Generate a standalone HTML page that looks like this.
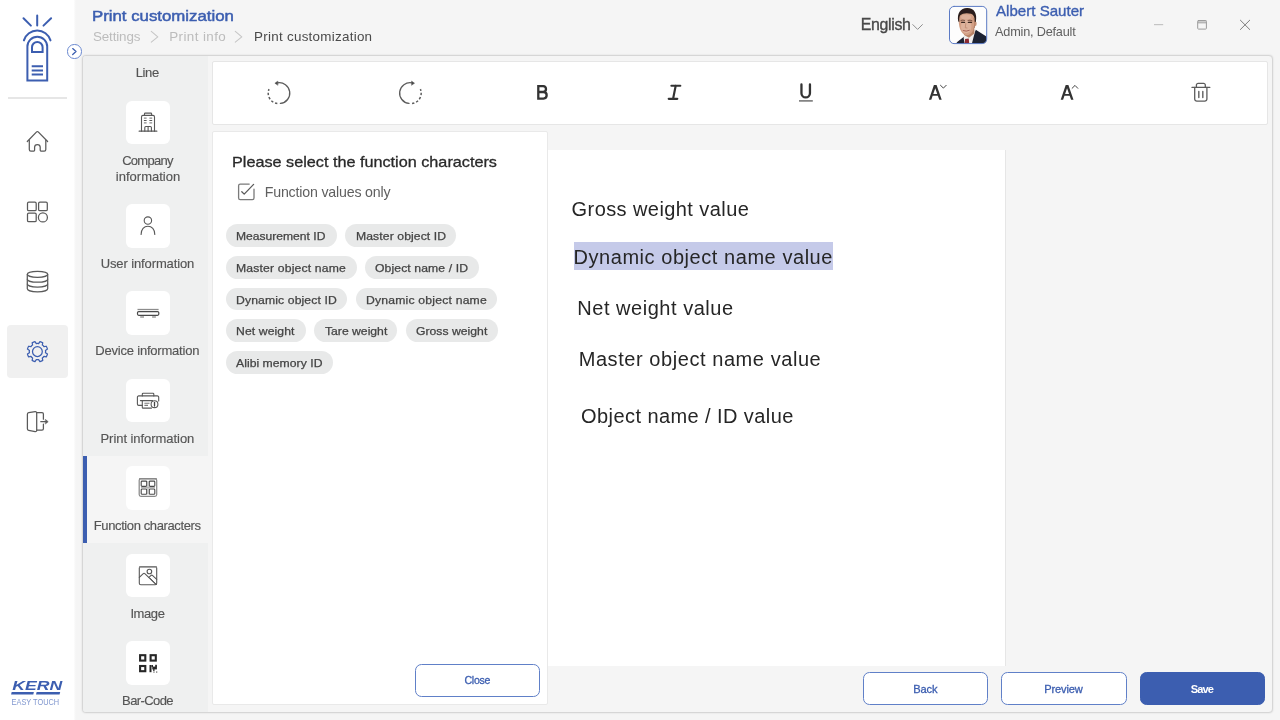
<!DOCTYPE html>
<html>
<head>
<meta charset="utf-8">
<title>Print customization</title>
<style>
*{box-sizing:border-box;margin:0;padding:0}
html,body{width:1280px;height:720px;overflow:hidden;background:#f5f5f5;font-family:"Liberation Sans",sans-serif;color:#333}
.t{position:absolute;white-space:nowrap;line-height:1}
#tx{position:absolute;left:0;top:0;width:1280px;height:720px;will-change:transform}
svg{position:absolute;overflow:visible}
#side{position:absolute;left:0;top:0;width:77px;height:720px;background:linear-gradient(90deg,#fff 0,#fff 73.5px,#f5f5f5 75.8px)}
#sep{position:absolute;left:8px;top:97px;width:59px;height:2px;background:#e6e6e6}
#sel{position:absolute;left:7px;top:325px;width:61px;height:53px;border-radius:4px;background:#f0f0f0}
#expand{position:absolute;left:67.2px;top:44.3px;width:14.4px;height:14.4px;border-radius:50%;background:#fff;border:1.1px solid #6a88cf}
#cont{position:absolute;left:82px;top:55px;width:1191px;height:658px;border:1px solid #d6d6d6;border-radius:4px;background:#f5f5f5;box-shadow:0 0 2px rgba(0,0,0,.12)}
#nav{position:absolute;left:83px;top:56px;width:125px;height:656px;background:#eff0f0;border-radius:3px 0 0 3px}
#navsel{position:absolute;left:84px;top:455.7px;width:124.5px;height:87.6px;background:#f5f5f5}
#navbar{position:absolute;left:83.4px;top:455.7px;width:4.1px;height:87.6px;background:#3c5eb0}
.ib{position:absolute;left:126.1px;width:43.7px;height:43.8px;border-radius:6px;background:#fff}
#tool{position:absolute;left:212px;top:61px;width:1056px;height:64px;background:#fff;border:1px solid #e6e6e6;border-radius:2px}
#pop{position:absolute;left:212px;top:131px;width:336px;height:574px;background:#fff;border:1px solid #e9e9e9;border-radius:2px}
#canvas{position:absolute;left:547px;top:150px;width:459px;height:516px;background:#fff;border-right:1px solid #e6e6e6}
.chip{position:absolute;height:22.9px;border-radius:12px;background:#e8e9e9}
.btn{position:absolute;height:32.7px;border-radius:6.5px;border:1.5px solid #6080c8;background:#fff}
.btn.pri{background:#3c5eb0;border-color:#3c5eb0}
#hl{position:absolute;left:573.5px;top:242px;width:259.5px;height:27.6px;background:#c5cae9}
</style>
</head>
<body>
<div id="side"></div>
<div id="sep"></div>
<div id="sel"></div>
<div id="cont"></div>
<div id="nav"></div>
<div id="navsel"></div>
<div id="navbar"></div>

<div class="ib" style="top:100.6px"></div>
<div class="ib" style="top:203.9px"></div>
<div class="ib" style="top:291.2px"></div>
<div class="ib" style="top:378.5px"></div>
<div class="ib" style="top:465.9px"></div>
<div class="ib" style="top:553.6px"></div>
<div class="ib" style="top:641px"></div>

<div id="tool"></div>
<div id="canvas"></div>
<div id="hl"></div>
<div id="pop"></div>

<div class="chip" style="left:225.7px;top:224.1px;width:111px"></div>
<div class="chip" style="left:345px;top:224.1px;width:110.6px"></div>
<div class="chip" style="left:225.7px;top:255.8px;width:130.9px"></div>
<div class="chip" style="left:365px;top:255.8px;width:114px"></div>
<div class="chip" style="left:225.7px;top:287.5px;width:121.8px"></div>
<div class="chip" style="left:355.9px;top:287.5px;width:141.6px"></div>
<div class="chip" style="left:225.7px;top:319.2px;width:80.4px"></div>
<div class="chip" style="left:314px;top:319.2px;width:83.4px"></div>
<div class="chip" style="left:405.8px;top:319.2px;width:92.4px"></div>
<div class="chip" style="left:225.7px;top:350.9px;width:107.6px"></div>

<div class="btn" style="left:414.8px;top:664.4px;width:125.2px"></div>
<div class="btn" style="left:863.2px;top:672.3px;width:125.3px"></div>
<div class="btn" style="left:1001.3px;top:672.3px;width:125.3px"></div>
<div class="btn pri" style="left:1139.8px;top:672.4px;width:125.4px"></div>

<div id="tx">
<div class="t" style="left:92.09px;top:7.53px;font-size:15.2px;color:#3c5eb0;letter-spacing:0.000px;transform:scaleX(1.1060);transform-origin:0 0;-webkit-text-stroke:0.5px #3c5eb0">Print customization</div>
<div class="t" style="left:93.00px;top:29.86px;font-size:13.4px;color:#bcbcbc;letter-spacing:-0.141px">Settings</div>
<div class="t" style="left:169.20px;top:29.86px;font-size:13.4px;color:#bcbcbc;letter-spacing:0.412px">Print info</div>
<div class="t" style="left:254.10px;top:29.86px;font-size:13.4px;color:#4a4a4a;letter-spacing:0.268px">Print customization</div>
<div class="t" style="left:860.70px;top:17.14px;font-size:15.9px;color:#484848;letter-spacing:-0.313px;-webkit-text-stroke:0.35px #484848">English</div>
<div class="t" style="left:995.50px;top:3.68px;font-size:14.5px;color:#3c5eb0;letter-spacing:0.000px;transform:scaleX(1.0413);transform-origin:0 0;-webkit-text-stroke:0.35px #3c5eb0">Albert Sauter</div>
<div class="t" style="left:995.10px;top:26.35px;font-size:12.7px;color:#606060;letter-spacing:-0.199px">Admin, Default</div>
<div class="t" style="left:135.70px;top:66.20px;font-size:13.0px;color:#555555;letter-spacing:-0.383px;-webkit-text-stroke:0.15px #555555">Line</div>
<div class="t" style="left:122.20px;top:154.30px;font-size:13.0px;color:#555555;letter-spacing:-0.740px;-webkit-text-stroke:0.15px #555555">Company</div>
<div class="t" style="left:115.80px;top:169.90px;font-size:13.0px;color:#555555;letter-spacing:0.012px;-webkit-text-stroke:0.15px #555555">information</div>
<div class="t" style="left:100.70px;top:257.10px;font-size:13.0px;color:#555555;letter-spacing:-0.116px;-webkit-text-stroke:0.15px #555555">User information</div>
<div class="t" style="left:95.30px;top:344.30px;font-size:13.0px;color:#555555;letter-spacing:-0.207px;-webkit-text-stroke:0.15px #555555">Device information</div>
<div class="t" style="left:100.50px;top:431.70px;font-size:13.0px;color:#555555;letter-spacing:-0.051px;-webkit-text-stroke:0.15px #555555">Print information</div>
<div class="t" style="left:93.80px;top:519.30px;font-size:13.0px;color:#555555;letter-spacing:-0.392px;-webkit-text-stroke:0.15px #555555">Function characters</div>
<div class="t" style="left:130.40px;top:606.70px;font-size:13.0px;color:#555555;letter-spacing:-0.400px;-webkit-text-stroke:0.15px #555555">Image</div>
<div class="t" style="left:122.10px;top:694.20px;font-size:13.0px;color:#555555;letter-spacing:-0.601px;-webkit-text-stroke:0.15px #555555">Bar-Code</div>
<div class="t" style="left:232.00px;top:154.77px;font-size:14.8px;color:#2a2a2a;letter-spacing:-0.000px;transform:scaleX(1.0956);transform-origin:0 0;-webkit-text-stroke:0.3px #2a2a2a">Please select the function characters</div>
<div class="t" style="left:264.70px;top:184.98px;font-size:14.2px;color:#606060;letter-spacing:-0.181px">Function values only</div>
<div class="t" style="left:571.60px;top:198.67px;font-size:20.0px;color:#262626;letter-spacing:0.420px">Gross weight value</div>
<div class="t" style="left:573.50px;top:246.67px;font-size:20.0px;color:#262626;letter-spacing:0.552px">Dynamic object name value</div>
<div class="t" style="left:577.30px;top:298.07px;font-size:20.0px;color:#262626;letter-spacing:0.531px">Net weight value</div>
<div class="t" style="left:578.70px;top:348.67px;font-size:20.0px;color:#262626;letter-spacing:0.566px">Master object name value</div>
<div class="t" style="left:581.10px;top:405.87px;font-size:20.0px;color:#262626;letter-spacing:0.419px">Object name / ID value</div>
<div class="t" style="left:236.30px;top:231.14px;font-size:10.7px;color:#444444;letter-spacing:0.000px;transform:scaleX(1.1314);transform-origin:0 0;-webkit-text-stroke:0.25px #444444">Measurement ID</div>
<div class="t" style="left:355.50px;top:231.14px;font-size:10.7px;color:#444444;letter-spacing:0.081px;transform:scaleX(1.1400);transform-origin:0 0;-webkit-text-stroke:0.25px #444444">Master object ID</div>
<div class="t" style="left:236.30px;top:262.84px;font-size:10.7px;color:#444444;letter-spacing:0.147px;transform:scaleX(1.1400);transform-origin:0 0;-webkit-text-stroke:0.25px #444444">Master object name</div>
<div class="t" style="left:375.20px;top:262.84px;font-size:10.7px;color:#444444;letter-spacing:0.092px;transform:scaleX(1.1400);transform-origin:0 0;-webkit-text-stroke:0.25px #444444">Object name / ID</div>
<div class="t" style="left:236.30px;top:294.54px;font-size:10.7px;color:#444444;letter-spacing:0.105px;transform:scaleX(1.1400);transform-origin:0 0;-webkit-text-stroke:0.25px #444444">Dynamic object ID</div>
<div class="t" style="left:366.10px;top:294.54px;font-size:10.7px;color:#444444;letter-spacing:0.175px;transform:scaleX(1.1400);transform-origin:0 0;-webkit-text-stroke:0.25px #444444">Dynamic object name</div>
<div class="t" style="left:236.30px;top:326.24px;font-size:10.7px;color:#444444;letter-spacing:0.088px;transform:scaleX(1.1400);transform-origin:0 0;-webkit-text-stroke:0.25px #444444">Net weight</div>
<div class="t" style="left:324.70px;top:326.24px;font-size:10.7px;color:#444444;letter-spacing:-0.000px;transform:scaleX(1.1393);transform-origin:0 0;-webkit-text-stroke:0.25px #444444">Tare weight</div>
<div class="t" style="left:416.00px;top:326.24px;font-size:10.7px;color:#444444;letter-spacing:0.013px;transform:scaleX(1.1400);transform-origin:0 0;-webkit-text-stroke:0.25px #444444">Gross weight</div>
<div class="t" style="left:236.30px;top:357.94px;font-size:10.7px;color:#444444;letter-spacing:0.031px;transform:scaleX(1.1400);transform-origin:0 0;-webkit-text-stroke:0.25px #444444">Alibi memory ID</div>
<div class="t" style="left:464.40px;top:675.03px;font-size:10.6px;color:#3c5eb0;letter-spacing:-0.248px;-webkit-text-stroke:0.3px #3c5eb0">Close</div>
<div class="t" style="left:913.30px;top:683.55px;font-size:11.1px;color:#3c5eb0;letter-spacing:-0.172px;-webkit-text-stroke:0.3px #3c5eb0">Back</div>
<div class="t" style="left:1044.20px;top:683.55px;font-size:11.1px;color:#3c5eb0;letter-spacing:-0.141px;-webkit-text-stroke:0.3px #3c5eb0">Preview</div>
<div class="t" style="left:1190.70px;top:683.55px;font-size:11.1px;color:#ffffff;letter-spacing:-0.880px;font-weight:bold">Save</div>
</div>

<div id="expand"></div>
<svg id="ov" width="1280" height="720" viewBox="0 0 1280 720" style="left:0;top:0" fill="none" stroke-linecap="round" stroke-linejoin="round">
<defs>
<clipPath id="avc"><rect x="949.5" y="6.4" width="37" height="37" rx="4"/></clipPath>
<filter id="bl" x="-10%" y="-10%" width="120%" height="120%"><feGaussianBlur stdDeviation="0.65"/></filter>
</defs>

<!-- ===== app logo (finger touch) ===== -->
<g stroke="#3c5eb0" stroke-width="2">
<path d="M37.2 15.4V25.6M23.5 18.3L30.9 25.6M51.1 18.3L43.5 25.6"/>
<path d="M23.9 40.4A13.9 13.9 0 0 1 50.5 40.4"/>
<path d="M27.4 80.4V46.6A9.9 9.9 0 0 1 47.2 46.600V80.4Z" stroke-linejoin="miter"/>
<path d="M32 52V47.300A5.3 5.3 0 0 1 42.600 47.300V52Z" stroke-linejoin="miter"/>
<path d="M31.700 66.300H43M31.700 70.500H43M31.700 74.600H43" stroke-linecap="butt"/>
</g>

<!-- expand chevron -->
<path d="M72.700 48.600L76 51.600L72.700 54.600" stroke="#3c5eb0" stroke-width="1.300"/>

<!-- ===== left sidebar icons ===== -->
<g stroke="#5a5a5a" stroke-width="1.25">
<!-- home -->
<path d="M29.300 140.300V149.600A1.600 1.600 0 0 0 30.900 151.200H33.400A1.200 1.200 0 0 0 34.600 150V147.300A2.800 2.800 0 0 1 40.200 147.300V150A1.200 1.200 0 0 0 41.400 151.200H44.200A1.600 1.600 0 0 0 45.800 149.600V140.300"/>
<path d="M27.300 141.500L36.600 131.900A1.100 1.100 0 0 1 38.200 131.900L47.600 141.500"/>
<!-- apps -->
<rect x="27.500" y="202.100" width="8.700" height="8.600" rx="1.300"/>
<rect x="38.600" y="202.100" width="8.700" height="8.600" rx="1.300"/>
<rect x="27.500" y="213" width="8.700" height="8.700" rx="1.300"/>
<circle cx="42.900" cy="217.400" r="4.500"/>
<!-- database -->
<ellipse cx="37.500" cy="274.300" rx="10.200" ry="3"/>
<path d="M27.300 274.300V288.800C27.300 290.500 31.900 291.800 37.500 291.800S47.700 290.500 47.700 288.800V274.300"/>
<path d="M27.300 279.200C27.300 280.900 31.900 282.200 37.500 282.200S47.700 280.900 47.700 279.200M27.300 284C27.300 285.700 31.900 287 37.500 287S47.700 285.700 47.700 284"/>
<!-- logout -->
<path d="M36.700 412.600H42A1.400 1.400 0 0 1 43.400 414V419.200M43.400 424.200V428.800A1.400 1.400 0 0 1 42 430.200H36.700"/>
<path d="M27.400 414.300A1.600 1.600 0 0 1 28.700 412.700L35.200 411.700A1.300 1.300 0 0 1 36.700 413V430.400A1.300 1.300 0 0 1 35.200 431.700L28.700 430.300A1.600 1.600 0 0 1 27.400 428.700Z"/>
<path d="M40.800 421.700H46.500"/>
</g>
<path d="M45.600 419.600L48.200 421.700L45.600 423.800Z" fill="#5a5a5a" stroke="#5a5a5a" stroke-width="0.6"/>

<!-- gear (blue) -->
<g stroke="#3c5eb0" stroke-width="1.25">
<circle cx="37.400" cy="351.600" r="4.900"/>
<path d="M45.47 350.42L47.44 349.06A10.30 10.30 0 0 0 46.28 346.25L43.92 346.68A4.46 4.46 0 0 0 42.32 345.08L42.75 342.72A10.30 10.30 0 0 0 39.94 341.56L38.58 343.53A4.46 4.46 0 0 0 36.32 343.53L34.96 341.56A10.30 10.30 0 0 0 32.15 342.72L32.58 345.08A4.46 4.46 0 0 0 30.98 346.68L28.62 346.25A10.30 10.30 0 0 0 27.46 349.06L29.43 350.42A4.46 4.46 0 0 0 29.43 352.68L27.46 354.04A10.30 10.30 0 0 0 28.62 356.85L30.98 356.42A4.46 4.46 0 0 0 32.58 358.02L32.15 360.38A10.30 10.30 0 0 0 34.96 361.54L36.32 359.57A4.46 4.46 0 0 0 38.58 359.57L39.94 361.54A10.30 10.30 0 0 0 42.75 360.38L42.32 358.02A4.46 4.46 0 0 0 43.92 356.42L46.28 356.85A10.30 10.30 0 0 0 47.44 354.04L45.47 352.68A4.46 4.46 0 0 0 45.47 350.42Z"/>
</g>

<!-- ===== KERN logo ===== -->
<g stroke="none">
<text x="12.200" y="689.600" font-family="Liberation Sans" font-weight="bold" font-style="italic" font-size="12" fill="#3c5eb0" textLength="50" lengthAdjust="spacingAndGlyphs">KERN</text>
<path d="M11.700 692.100H33.900L33.300 694.500H11.100Z" fill="#3c5eb0"/>
<path d="M36.600 692.100H60.200L59.600 694.500H36Z" fill="#3c5eb0"/>
<text x="11.600" y="704.900" font-family="Liberation Sans" font-size="8.800" fill="#8097cf" textLength="47.600" lengthAdjust="spacingAndGlyphs">EASY TOUCH</text>
</g>

<!-- ===== breadcrumb chevrons / language chevron ===== -->
<path d="M151.300 31.400L157.800 36.800L151.300 42.200M235.300 31.400L241.800 36.800L235.300 42.200" stroke="#c6c6c6" stroke-width="1.100"/>
<path d="M912.800 24.600L917.600 29.400L922.400 24.600" stroke="#8e8e8e" stroke-width="1"/>

<!-- ===== window controls ===== -->
<path d="M1154 24.600H1163.200" stroke="#c4c4c4" stroke-width="1.200" stroke-linecap="butt"/>
<rect x="1197.700" y="20.600" width="8.700" height="8.500" rx="0.800" stroke="#9a9a9a" stroke-width="1"/>
<path d="M1197.700 20.900H1206.400M1197.700 22.800H1206.400" stroke="#9a9a9a" stroke-width="1" stroke-linecap="butt"/>
<path d="M1240.400 20.200L1249.700 29.500M1249.700 20.200L1240.400 29.500" stroke="#7c7c7c" stroke-width="1"/>

<!-- ===== avatar ===== -->
<g clip-path="url(#avc)">
<rect x="949" y="6" width="38" height="38" fill="#fdfdfd" stroke="none"/>
<g filter="url(#bl)" stroke="none">
<!-- suit -->
<path d="M955.800 44L957.200 42L964.200 36.600L969.500 39.500L975.800 29.800L986 36.200L987 37V44Z" fill="#1d2030"/>
<!-- shirt -->
<path d="M963.600 37.400L965.500 34L975.600 29.800L973.600 37L971.800 44H964.600Z" fill="#f1efee"/>
<!-- tie -->
<path d="M965.100 38.900L968.700 38.400L969.300 44H964.500Z" fill="#8a2930"/>
<!-- neck -->
<path d="M962.800 29H974.400V33.500L969 37.800L964 35Z" fill="#b98468"/>
<!-- face -->
<path d="M958.700 20C958.500 14.500 962 12.400 967 12.400C972 12.400 975.500 14.500 975.400 20C975.400 25 974.500 28.500 972.500 31.500C970.800 34 968.800 35.200 967 35.200C965 35.200 963 34 961.300 31.500C959.500 28.500 958.700 25 958.700 20Z" fill="#d3a086"/>
<ellipse cx="966.200" cy="26.500" rx="5.200" ry="6.800" fill="#deb39c"/>
<ellipse cx="966" cy="17" rx="5" ry="2.600" fill="#dcb09a"/>
<path d="M972.600 17C974.500 20 974.600 26 972.800 30.800L975 27.500L975.600 20Z" fill="#b78267"/>
<!-- ear -->
<ellipse cx="975.500" cy="23.800" rx="1.100" ry="2.300" fill="#c48f74"/>
<!-- hair -->
<path d="M958.300 21.500C956.600 13.500 960.500 8.200 967 8C973.800 7.800 977.600 13 975.800 22L974.800 21.800C974.900 17.500 973.800 14.700 971 13.800C967 12.600 962.500 13.200 960.300 15.200C959 17 959.300 19.500 959.300 22Z" fill="#2b1f1b"/>
<!-- brows / eyes / nose / mouth -->
<path d="M961 20.400Q962.800 19.700 964.700 20.400M968 20.400Q970 19.700 972 20.600" stroke="#5a3a2e" stroke-width="0.700" fill="none"/>
<path d="M961.600 22.400H964.600M968.300 22.400H971.600" stroke="#3e2a24" stroke-width="1.100"/>
<path d="M965.800 23.500L965.300 27.800L967 28" stroke="#b98268" stroke-width="0.700" fill="none"/>
<path d="M963.200 30.600Q966.200 31.900 969.300 30.400" stroke="#a4584f" stroke-width="0.900" fill="none"/>
</g>
</g>
<rect x="949.500" y="6.400" width="37.200" height="37.200" rx="4.500" stroke="#5b7ac4" stroke-width="1"/>

<!-- ===== nav icons ===== -->
<g stroke="#585858" stroke-width="1.100">
<!-- building -->
<path d="M139.200 131.200H156.800" stroke-width="1.300"/>
<path d="M141.500 131.200V116.900A1.500 1.500 0 0 1 143 115.400H153A1.500 1.500 0 0 1 154.500 116.900V131.200"/>
<path d="M144.500 115.400V113.800A0.700 0.700 0 0 1 145.200 113.100H150.900A0.700 0.700 0 0 1 151.600 113.800V115.400"/>
<path d="M143.900 118.200H146.600M149.400 118.200H152.200M143.900 122.900H146.600M149.400 122.900H152.200" stroke="#8a8a8a" stroke-width="1.200" stroke-linecap="butt"/>
<path d="M143.900 120.500H146.600M149.400 120.500H152.200" stroke-width="1.100" stroke-linecap="butt"/>
<path d="M144.800 131.200V127.500A1 1 0 0 1 145.800 126.500H150.400A1 1 0 0 1 151.400 127.500V131.200M148.100 126.800V131.200"/>
<!-- user -->
<circle cx="147.900" cy="220.600" r="3.700"/>
<path d="M141.100 234.500C141.100 229.500 144 226.200 147.900 226.200S154.800 229.500 154.800 234.500"/>
<!-- device (scale) -->
<path d="M137.500 309.500H158.600" stroke="#8c8c8c" stroke-width="1.300" stroke-linecap="butt"/>
<rect x="137.500" y="311.600" width="21.300" height="3.700" rx="1.200" stroke="#4a4a4a" stroke-width="1.200"/>
<path d="M140.200 317.100H144M152.100 317.100H155.900" stroke="#9a9a9a" stroke-width="1.500" stroke-linecap="butt"/>
<!-- printer -->
<path d="M142.300 395.900V394A0.800 0.800 0 0 1 143.100 393.200H153A0.800 0.800 0 0 1 153.800 394V395.900"/>
<path d="M142.200 405.400H138.700A1.300 1.300 0 0 1 137.400 404.100V397.200A1.300 1.300 0 0 1 138.700 395.900H157.400A1.300 1.300 0 0 1 158.700 397.200V401"/>
<path d="M140.400 400.600H152.500"/>
<path d="M142.300 400.800V407.400A0.700 0.700 0 0 0 143 408.100H151.500"/>
<path d="M144.400 403.300H149.500M144.400 405.400H148" stroke="#7a7a7a" stroke-linecap="butt"/>
<circle cx="154.500" cy="404.200" r="3.400" fill="#fff"/>
<path d="M154.500 402.500V406" stroke-width="1.300" stroke="#444"/>
<!-- function characters -->
<rect x="139.200" y="478.500" width="17.500" height="17.800" rx="1.800" stroke="#8a8a8a" stroke-width="1.250"/>
<path d="M139.800 478.700H156.100" stroke="#8a8a8a" stroke-width="1.500"/>
<rect x="141.200" y="481.100" width="5.500" height="5.300" rx="0.900" stroke="#4a4a4a"/>
<rect x="149.300" y="481.100" width="5.500" height="5.300" rx="0.900" stroke="#4a4a4a"/>
<rect x="141.200" y="489" width="5.500" height="5.300" rx="0.900" stroke="#4a4a4a"/>
<rect x="149.300" y="489" width="5.500" height="5.300" rx="0.900" stroke="#4a4a4a"/>
<path d="M148 481V494.500M141 487.700H155" stroke="#b5b5b5" stroke-width="1.300" stroke-linecap="butt"/>
<!-- image -->
<rect x="139.300" y="566.500" width="17.400" height="18.300" rx="1.500"/>
<path d="M139.800 567H156.200" stroke="#8a8a8a" stroke-width="1.600"/>
<circle cx="149.400" cy="571.500" r="2.300"/>
<path d="M139.300 577.400L143 573.800A1.500 1.500 0 0 1 145.100 573.800L155.900 584.300"/>
<path d="M148.900 577.400L150.800 575.600A1.400 1.400 0 0 1 152.700 575.600L156.700 579.300"/>
<path d="M150.200 578.400L156.600 584.600" stroke-width="0.900"/>
</g>
<!-- qr -->
<g transform="translate(0,0.6)"><g stroke="#262626" stroke-width="2.100" stroke-linejoin="miter" stroke-linecap="butt">
<rect x="140.100" y="654.600" width="5.200" height="5.400"/>
<rect x="150.600" y="654.600" width="5.200" height="5.400"/>
<rect x="140.100" y="665.400" width="5.200" height="5.200"/>
</g>
<g fill="#262626" stroke="none">
<rect x="149.500" y="664.400" width="2" height="7.200"/>
<rect x="151.500" y="664.400" width="1.500" height="2"/>
<rect x="152.300" y="666" width="4.600" height="2.800"/>
<rect x="155.200" y="664.200" width="1.700" height="2.200"/>
<rect x="153" y="668.600" width="1.600" height="1.600"/>
<rect x="153.300" y="670.900" width="1.300" height="1.100" fill="#555"/>
<rect x="156" y="670.900" width="1.300" height="1.100" fill="#555"/>
</g></g>

<!-- ===== toolbar icons ===== -->
<g stroke="#5c5c5c" stroke-width="1.300">
<!-- undo -->
<path d="M277.51 82.86 A10.40 10.40 0 1 1 280.41 103.44"/>
<path d="M277.33 103.52 A10.40 10.40 0 0 1 269.03 89.14" stroke-dasharray="2.4 1.9" stroke-linecap="butt" stroke-width="1.5"/>
<path d="M277.60 81.30 L274.90 83.20 L277.60 85.10 Z" fill="#4a4a4a" stroke="#4a4a4a" stroke-width="0.5"/>
<!-- redo -->
<path d="M411.89 82.86 A10.40 10.40 0 1 0 408.99 103.44"/>
<path d="M412.07 103.52 A10.40 10.40 0 0 0 420.37 89.14" stroke-dasharray="2.4 1.9" stroke-linecap="butt" stroke-width="1.5"/>
<path d="M411.80 81.30 L414.50 83.20 L411.80 85.10 Z" fill="#4a4a4a" stroke="#4a4a4a" stroke-width="0.5"/>
<!-- trash -->
<path d="M1192 87.400H1209.800"/>
<path d="M1196.400 87.400V85.100A1.700 1.700 0 0 1 1198.100 83.400H1203.600A1.700 1.700 0 0 1 1205.300 85.100V87.400"/>
<path d="M1194.700 87.400V99A2.100 2.100 0 0 0 1196.800 101.100H1204.800A2.100 2.100 0 0 0 1206.900 99V87.400"/>
<path d="M1198.800 91.400V97.400M1202.800 91.400V97.400" stroke="#6a6a6a" stroke-width="1.500"/>
</g>
<g stroke="#333" stroke-width="2.100">
<!-- B -->
<path d="M538.3 86.05H543.2A2.98 2.98 0 0 1 543.2 92H538.3H543.5A3.33 3.33 0 0 1 543.5 98.65H538.3Z" stroke-linejoin="miter" stroke-width="2.3"/>
<!-- I -->
<path d="M671.400 85.700H680.300M668.700 98.800H677.300M675.700 85.700L673.100 98.800" stroke-width="2.15"/>
<!-- U -->
<path d="M801.45 84.5V93.2A4.25 4.25 0 0 0 809.95 93.2V84.5" stroke-width="2.3"/>
<path d="M799 100.900H812.800" stroke="#6e6e6e" stroke-width="1.500" stroke-linecap="butt"/>
</g>
<g fill="#333" stroke="none" fill-rule="evenodd">
<!-- A (down) -->
<path d="M928.90 99.80 L933.90 85.10 L936.60 85.10 L941.70 99.80 L939.30 99.80 L937.85 95.80 L932.66 95.80 L931.30 99.80ZM933.30 93.90 L935.26 88.16 L937.25 93.90Z"/>
<!-- A (up) -->
<path d="M1060.70 99.80 L1065.70 85.10 L1068.40 85.10 L1073.50 99.80 L1071.10 99.80 L1069.65 95.80 L1064.46 95.80 L1063.10 99.80ZM1065.10 93.90 L1067.06 88.16 L1069.05 93.90Z"/>
</g>
<path d="M940.500 85.300L943.400 88.100L946.200 85.300M1072.100 88.300L1075 85.400L1077.800 88.300" stroke="#444" stroke-width="1"/>

<!-- ===== checkbox ===== -->
<path d="M249.200 184.100H240.200A1.600 1.600 0 0 0 238.600 185.700V198A1.600 1.600 0 0 0 240.200 199.600H252.400A1.600 1.600 0 0 0 254 198V189.200" stroke="#7a7a7a" stroke-width="1.300"/>
<path d="M241.800 191.800L244.200 194.100L253.600 184.400" stroke="#5a5a5a" stroke-width="1.300"/>
</svg>

</body>
</html>
